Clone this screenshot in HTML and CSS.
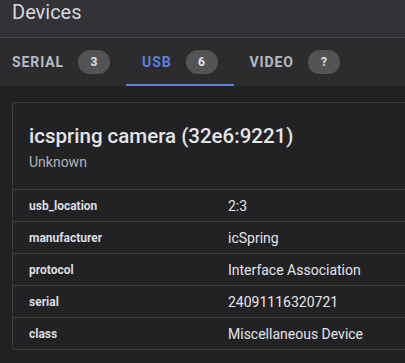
FILE: index.html
```html
<!DOCTYPE html>
<html>
<head>
<meta charset="utf-8">
<link rel="stylesheet" href="styles.css">
</head>
<body>
<header class="appbar">
  <h1 class="appbar-title">Devices</h1>
</header>
<nav class="tabs">
  <div class="tab tab-first"><span class="tab-label">Serial</span><span class="badge">3</span></div>
  <div class="tab tab-active"><span class="tab-label">USB</span><span class="badge">6</span></div>
  <div class="tab"><span class="tab-label">Video</span><span class="badge">?</span></div>
</nav>
<main class="content">
  <section class="card">
    <div class="card-head">
      <h2 class="card-title">icspring camera (32e6:9221)</h2>
      <div class="card-sub">Unknown</div>
    </div>
    <div class="props">
      <div class="row"><div class="key">usb_location</div><div class="val">2:3</div></div>
      <div class="row"><div class="key">manufacturer</div><div class="val">icSpring</div></div>
      <div class="row"><div class="key">protocol</div><div class="val">Interface Association</div></div>
      <div class="row"><div class="key">serial</div><div class="val">24091116320721</div></div>
      <div class="row"><div class="key">class</div><div class="val">Miscellaneous Device</div></div>
    </div>
  </section>
</main>
</body>
</html>
```

FILE: styles.css
```css
* { box-sizing: border-box; }
html, body {
  margin: 0;
  padding: 0;
  background: #212123;
  font-family: Roboto, "Liberation Sans", sans-serif;
  overflow: hidden;
  width: 405px;
  height: 363px;
}
.appbar {
  background: #323237;
  height: 38px;
  padding: 0 12px 13px;
  border-bottom: 1px solid #46464b;
}
.appbar-title {
  margin: 0;
  font-size: 20px;
  line-height: 24px;
  font-weight: 400;
  color: #d6d9df;
}
.tabs {
  display: flex;
  height: 48px;
  background: #2c2c2f;
}
.tab {
  position: relative;
  display: flex;
  align-items: center;
  gap: 14px;
  padding: 0 16px;
  height: 48px;
}
.tab-first { padding-left: 12px; }
.tab-label {
  font-size: 14px;
  font-weight: 700;
  text-transform: uppercase;
  letter-spacing: 0.9px;
  color: #b4b9c2;
}
.tab-active .tab-label { color: #5b7fdc; }
.tab-active::after {
  content: "";
  position: absolute;
  left: 0;
  right: 0;
  bottom: 0;
  height: 2px;
  background: #5b7fdc;
}
.badge {
  width: 32px;
  height: 24px;
  border-radius: 12px;
  background: #545456;
  color: #e2e2e4;
  font-size: 12px;
  font-weight: 700;
  display: flex;
  align-items: center;
  justify-content: center;
}
.content {
  padding: 16px 0 0 12px;
}
.card {
  width: 393px;
  margin-right: -120px;
  border: 1px solid #3e3e40;
  border-right: 0;
  border-radius: 4px 0 0 4px;
  background: #222224;
}
.card-head {
  padding: 18px 16px 17px;
}
.card-title {
  margin: 0;
  font-size: 20.5px;
  line-height: 30px;
  font-weight: 500;
  color: #e3e4e8;
}
.card-sub {
  margin-top: 1px;
  font-size: 14px;
  line-height: 20px;
  color: #b0b3b8;
}
.row {
  display: grid;
  grid-template-columns: 215px 1fr;
  align-items: center;
  height: 32px;
  border-top: 1px solid #3e3e40;
}
.key {
  padding-left: 16px;
  font-size: 12px;
  font-weight: 700;
  color: #dcdde2;
}
.val {
  font-size: 14px;
  color: #e2e4ea;
}
```
